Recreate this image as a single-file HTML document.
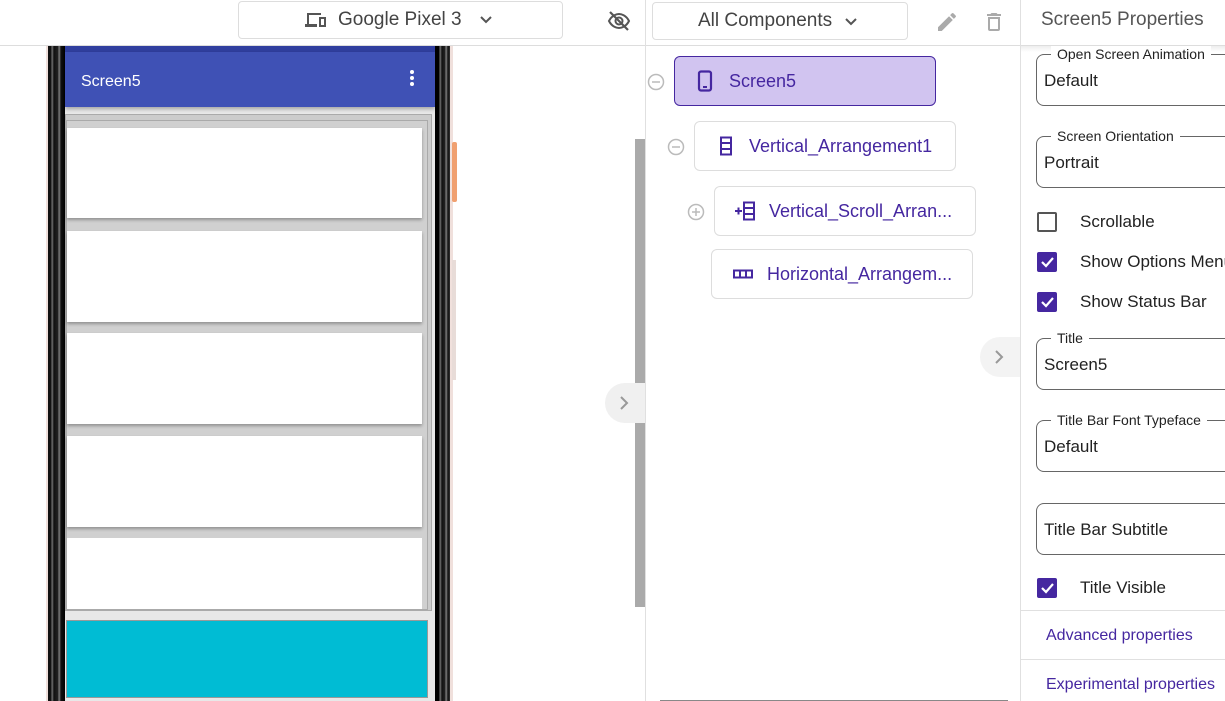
<!DOCTYPE html>
<html><head><meta charset="utf-8"><style>
*{box-sizing:border-box;margin:0;padding:0}
body{width:1225px;height:701px;overflow:hidden;background:#fff;font-family:"Liberation Sans",sans-serif;position:relative}
.a{position:absolute;white-space:nowrap}
.pur{color:#4527a0}
.card{position:absolute;left:67px;width:355px;background:#fff;box-shadow:0 2px 3px rgba(0,0,0,.3)}
.node{position:absolute;border:1px solid #ddd;border-radius:6px;font-size:18px;color:#4527a0;display:flex;align-items:center;white-space:nowrap}
.fld{position:absolute;left:1036px;width:200px;height:52px;border:1px solid #666;border-radius:8px;white-space:nowrap}
.fld .lb{position:absolute;top:-9px;left:14px;background:#fff;padding:0 6px;font-size:14px;color:#222}
.fld .v{position:absolute;left:7px;top:16px;font-size:17px;color:#222}
.cb{position:absolute;left:1037px;width:20px;height:20px;border-radius:2px}
.cb.on{background:#4527a0}
.cb.off{border:2px solid #555}
.cbl{position:absolute;left:1080px;font-size:17px;color:#222;white-space:nowrap}
</style></head><body>
<div class="a" style="left:1021px;top:46px;width:204px;height:6px;background:linear-gradient(#eee,#fff)"></div>
<div class="a" style="left:0;top:45px;width:1225px;height:1px;background:#ddd"></div>
<div class="a" style="left:645px;top:0;width:1px;height:701px;background:#e0e0e0"></div>
<div class="a" style="left:1020px;top:0;width:1px;height:701px;background:#e0e0e0"></div>
<div class="a" style="left:238px;top:1px;width:325px;height:38px;border:1px solid #ddd;border-radius:4px"></div>
<svg class="a" style="left:304px;top:11px" width="24" height="18" viewBox="0 0 24 18"><path d="M3 2h14v2H5v9h8v3H1v-3h2z M15 6h7v10h-7z M17 8v6h3V8z" fill="#555"/></svg>
<div class="a" style="left:338px;top:9px;font-size:19px;color:#444">Google Pixel 3</div>
<svg class="a" style="left:479px;top:14px" width="14" height="12"><path d="M2 3l5 5 5-5" stroke="#555" stroke-width="2" fill="none"/></svg>
<svg class="a" style="left:606px;top:9px" width="26" height="24" viewBox="0 0 24 24"><path d="M2 12c3-6 8-7 10-7s7 1 10 7c-3 6-8 7-10 7s-7-1-10-7z" stroke="#555" stroke-width="2" fill="none"/><circle cx="12" cy="12" r="3.5" stroke="#555" stroke-width="2" fill="none"/><path d="M3 3l18 18" stroke="#555" stroke-width="2.2"/></svg>

<div class="a" style="left:652px;top:2px;width:256px;height:38px;border:1px solid #ddd;border-radius:4px"></div>
<div class="a" style="left:698px;top:10px;font-size:19px;color:#444">All Components</div>
<svg class="a" style="left:844px;top:16px" width="14" height="12"><path d="M2 3l5 5 5-5" stroke="#555" stroke-width="2" fill="none"/></svg>
<svg class="a" style="left:935px;top:10px" width="24" height="24" viewBox="0 0 24 24"><path d="M3 17.25V21h3.75L17.8 9.94l-3.75-3.75zM20.7 7.04a1 1 0 000-1.41l-2.34-2.34a1 1 0 00-1.41 0l-1.83 1.83 3.75 3.75z" fill="#aaa"/></svg>
<svg class="a" style="left:982px;top:10px" width="24" height="24" viewBox="0 0 24 24"><path d="M6 19a2 2 0 002 2h8a2 2 0 002-2V7H6zM8 9h8v10H8zM15.5 4l-1-1h-5l-1 1H5v2h14V4z" fill="#aaa"/></svg>
<div class="a" style="left:1041px;top:9px;font-size:19px;color:#555">Screen5 Properties</div>

<div class="a" style="left:46px;top:46px;width:2px;height:655px;background:#f0e0dc"></div>
<div class="a" style="left:48px;top:46px;width:17px;height:655px;background:linear-gradient(90deg,#111 0,#111 3px,#777 4px,#111 6px,#222 10px,#888 11px,#111 13px,#000 17px)"></div>
<div class="a" style="left:435px;top:46px;width:15px;height:655px;background:linear-gradient(90deg,#000 0,#000 4px,#777 5px,#111 7px,#222 10px,#888 11px,#111 13px,#333 15px)"></div>
<div class="a" style="left:450px;top:46px;width:3px;height:655px;background:#f0e0dc"></div>
<div class="a" style="left:452px;top:142px;width:5px;height:60px;background:#f0a070;border-radius:2px"></div>
<div class="a" style="left:452px;top:260px;width:4px;height:120px;background:#e8dcd8"></div>
<div class="a" style="left:65px;top:46px;width:370px;height:655px;background:#e8e8e8"></div>
<div class="a" style="left:65px;top:46px;width:370px;height:6px;background:#303f9f"></div>
<div class="a" style="left:65px;top:52px;width:370px;height:55px;background:#3f51b5;box-shadow:0 2px 4px rgba(0,0,0,.3)"></div>
<div class="a" style="left:81px;top:73px;font-size:16px;color:#fff">Screen5</div>
<div class="a" style="left:410px;top:70px;width:4px;height:4px;border-radius:2px;background:#fff;box-shadow:0 6px 0 #fff,0 12px 0 #fff"></div>
<div class="a" style="left:65px;top:114px;width:367px;height:497px;border:1px solid #aaa;background:#ccc"></div>
<div class="a" style="left:66px;top:120px;width:362px;height:490px;border:1px solid #aaa;background:#d0d0d0"></div>
<div class="card" style="top:128px;height:90px"></div>
<div class="card" style="top:231px;height:91px"></div>
<div class="card" style="top:333px;height:91px"></div>
<div class="card" style="top:436px;height:91px"></div>
<div class="card" style="top:538px;height:71px;box-shadow:none"></div>
<div class="a" style="left:66px;top:620px;width:362px;height:78px;background:#00bcd4;border:1px solid #999"></div>

<div class="a" style="left:635px;top:139px;width:10px;height:468px;background:#aaa"></div>
<div class="a" style="left:605px;top:383px;width:40px;height:40px;border-radius:20px 0 0 20px;background:#f0f0f0"></div>
<svg class="a" style="left:617px;top:395px" width="14" height="16"><path d="M4 2l6 6-6 6" stroke="#999" stroke-width="2" fill="none"/></svg>
<div class="a" style="left:980px;top:337px;width:40px;height:40px;border-radius:20px 0 0 20px;background:#f3f3f3"></div>
<svg class="a" style="left:992px;top:349px" width="14" height="16"><path d="M4 2l6 6-6 6" stroke="#999" stroke-width="2" fill="none"/></svg>
<div class="a" style="left:660px;top:700px;width:348px;height:1px;background:#888"></div>

<svg class="a" style="left:647px;top:73px" width="18" height="18"><circle cx="9" cy="9" r="7.5" stroke="#bbb" stroke-width="1.5" fill="none"/><path d="M5 9h8" stroke="#bbb" stroke-width="1.5"/></svg>
<div class="node" style="left:674px;top:56px;width:262px;height:50px;background:#d1c4f0;border-color:#4527a0">
<svg style="margin-left:22px" width="16" height="22" viewBox="0 0 16 22"><rect x="2" y="1.5" width="12" height="19" rx="2" stroke="#4527a0" stroke-width="2.2" fill="none"/><path d="M6 17h4" stroke="#4527a0" stroke-width="2"/></svg>
<span style="margin-left:16px">Screen5</span></div>
<svg class="a" style="left:667px;top:138px" width="18" height="18"><circle cx="9" cy="9" r="7.5" stroke="#bbb" stroke-width="1.5" fill="none"/><path d="M5 9h8" stroke="#bbb" stroke-width="1.5"/></svg>
<div class="node" style="left:694px;top:121px;width:262px;height:50px">
<svg style="margin-left:24px" width="14" height="20" viewBox="0 0 14 20"><rect x="2" y="1.5" width="10" height="17" stroke="#4527a0" stroke-width="2" fill="none"/><path d="M2 7h10M2 13h10" stroke="#4527a0" stroke-width="2"/></svg>
<span style="margin-left:16px">Vertical_Arrangement1</span></div>
<svg class="a" style="left:687px;top:203px" width="18" height="18"><circle cx="9" cy="9" r="7.5" stroke="#bbb" stroke-width="1.5" fill="none"/><path d="M5 9h8M9 5v8" stroke="#bbb" stroke-width="1.5"/></svg>
<div class="node" style="left:714px;top:186px;width:262px;height:50px">
<svg style="margin-left:19px" width="22" height="20" viewBox="0 0 22 20"><path d="M1 10h7M4.5 6.5v7" stroke="#4527a0" stroke-width="2"/><rect x="10" y="1.5" width="10" height="17" stroke="#4527a0" stroke-width="2" fill="none"/><path d="M10 7h10M10 13h10" stroke="#4527a0" stroke-width="2"/></svg>
<span style="margin-left:13px">Vertical_Scroll_Arran...</span></div>
<div class="node" style="left:711px;top:249px;width:262px;height:50px">
<svg style="margin-left:21px" width="20" height="10" viewBox="0 0 20 10"><rect x="1" y="1.5" width="18" height="7" stroke="#4527a0" stroke-width="2" fill="none"/><path d="M7 1v8M13 1v8" stroke="#4527a0" stroke-width="2"/></svg>
<span style="margin-left:14px">Horizontal_Arrangem...</span></div>

<div class="fld" style="top:54px"><span class="lb">Open Screen Animation</span><span class="v">Default</span></div>
<div class="fld" style="top:136px"><span class="lb">Screen Orientation</span><span class="v">Portrait</span></div>
<div class="cb off" style="top:212px"></div><div class="cbl" style="top:212px">Scrollable</div>
<div class="cb on" style="top:252px"><svg width="20" height="20"><path d="M5 10l4 4 7-8" stroke="#fff" stroke-width="2.2" fill="none"/></svg></div><div class="cbl" style="top:252px">Show Options Menu</div>
<div class="cb on" style="top:292px"><svg width="20" height="20"><path d="M5 10l4 4 7-8" stroke="#fff" stroke-width="2.2" fill="none"/></svg></div><div class="cbl" style="top:292px">Show Status Bar</div>
<div class="fld" style="top:338px"><span class="lb">Title</span><span class="v">Screen5</span></div>
<div class="fld" style="top:420px"><span class="lb">Title Bar Font Typeface</span><span class="v">Default</span></div>
<div class="fld" style="top:503px"><span class="v">Title Bar Subtitle</span></div>
<div class="cb on" style="top:578px"><svg width="20" height="20"><path d="M5 10l4 4 7-8" stroke="#fff" stroke-width="2.2" fill="none"/></svg></div><div class="cbl" style="top:578px">Title Visible</div>
<div class="a" style="left:1021px;top:610px;width:204px;height:1px;background:#e0e0e0"></div>
<div class="a pur" style="left:1046px;top:627px;font-size:16px">Advanced properties</div>
<div class="a" style="left:1021px;top:659px;width:204px;height:1px;background:#e0e0e0"></div>
<div class="a pur" style="left:1046px;top:676px;font-size:16px">Experimental properties</div>
</body></html>
